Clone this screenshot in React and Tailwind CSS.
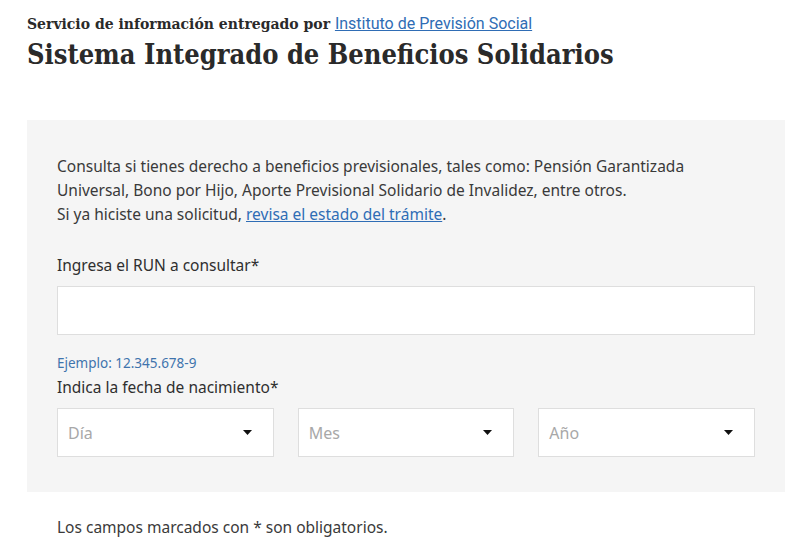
import React from "react";

const slab = { fontFamily: '"DejaVu Serif", "Liberation Serif", serif' };

function Caret() {
  return (
    <svg width="9" height="5" viewBox="0 0 9 5" className="shrink-0">
      <path d="M0 0 L9 0 L4.5 5 Z" fill="#111" />
    </svg>
  );
}

function Select({ label }) {
  return (
    <div className="h-[49px] bg-white border border-[#dedede] flex items-center justify-between pl-[10px] pr-[21px]">
      <span className="text-[16px] text-[#a8a8a8]">{label}</span>
      <Caret />
    </div>
  );
}

export default function App() {
  return (
    <div
      className="w-[800px] h-[554px] bg-white pl-[27px] pt-[14px] text-[#333]"
      style={{ fontFamily: '"Noto Sans", "Open Sans", sans-serif' }}
    >
      <div className="text-[14px] leading-[20px] font-bold text-[#2a2a2a]">
        <span style={slab}>Servicio de información entregado por </span>
        <a
          href="#"
          className="underline text-[#2f6db5] font-normal text-[16px]"
          style={{ fontFamily: 'Roboto, "Noto Sans", sans-serif' }}
        >
          Instituto de Previsión Social
        </a>
      </div>
      <h1
        className="text-[27px] leading-[36px] font-bold text-[#2a2a2a] mt-[3px]"
        style={{ ...slab, fontStretch: "condensed" }}
      >
        Sistema Integrado de Beneficios Solidarios
      </h1>

      <div className="mt-[47px] w-[758px] bg-[#f5f5f5] pt-[34px] pb-[35px] px-[30px]">
        <p className="text-[15.5px] leading-[24px] text-[#3a3a3a]">
          Consulta si tienes derecho a beneficios previsionales, tales como: Pensión Garantizada
          <br />
          Universal, Bono por Hijo, Aporte Previsional Solidario de Invalidez, entre otros.
          <br />
          Si ya hiciste una solicitud,{" "}
          <a href="#" className="underline text-[#2f6db5]">revisa el estado del trámite</a>.
        </p>

        <div className="mt-[27px] text-[15.5px] leading-[24px] text-[#2f2f2f]">Ingresa el RUN a consultar*</div>
        <div className="mt-[9px] h-[49px] bg-white border border-[#dedede]"></div>

        <div className="mt-[19px] text-[13.5px] leading-[18px] text-[#3f74ad]">Ejemplo: 12.345.678-9</div>
        <div className="mt-[3px] text-[15.5px] leading-[24px] text-[#2f2f2f]">Indica la fecha de nacimiento*</div>

        <div className="mt-[9px] grid grid-cols-3 gap-6">
          <Select label="Día" />
          <Select label="Mes" />
          <Select label="Año" />
        </div>
      </div>

      <div className="mt-[23px] pl-[30px] text-[15.5px] leading-[24px] text-[#3a3a3a]">
        Los campos marcados con * son obligatorios.
      </div>
    </div>
  );
}
